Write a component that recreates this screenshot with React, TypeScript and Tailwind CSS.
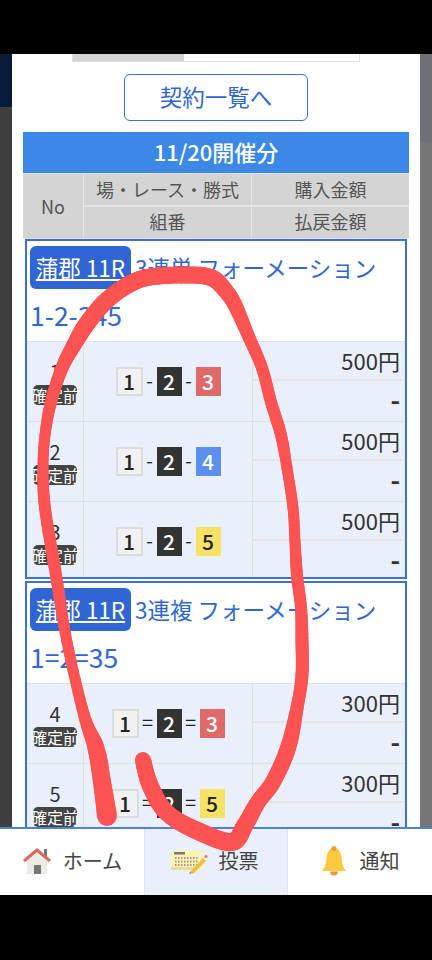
const jp = { fontFamily: '"Noto Sans CJK JP", "Noto Sans", sans-serif' };

type Bet = { no: number; a: string; b: string; c: string; amount: string };

const boatColors: Record<string, string> = {
    '1': 'bg-[#f1f1f1] border-2 border-[#dcdcdc] text-[#222]',
    '2': 'bg-[#333333] text-white',
    '3': 'bg-[#e06a6a] text-white',
    '4': 'bg-[#5c8fee] text-white',
    '5': 'bg-[#f6e265] text-[#222]',
};

const Boat = ({ n }: { n: string }) => (
    <div className={`flex items-center justify-center h-[29px] text-[21px] font-medium leading-none ${n === '1' ? 'w-[27px]' : 'w-[25px]'} ${boatColors[n]}`}>
        {n}
    </div>
);

const Row = ({ bet, sep, last }: { bet: Bet; sep: string; last?: boolean }) => (
    <div className={`flex shrink-0 bg-[#e9f0fc] border-t border-[#e0e0e0] ${last ? 'h-[76px]' : 'h-[80px]'}`}>
        <div className="w-[56px] shrink-0 flex flex-col items-center pt-[19px] text-[#333] text-[20px] leading-[22px]">
            <span>{bet.no}</span>
            {/* the text is wider than the pill in the original */}
            <div className="mt-[2px] bg-[#444] rounded-[5px] h-[20px] w-[44px] flex justify-center">
                <span className="text-white text-[16px] leading-[20px] whitespace-nowrap">確定前</span>
            </div>
        </div>
        <div className="w-[170px] shrink-0 border-x border-[#e0e0e0] flex items-start justify-center pt-[25px] text-[#222]">
            <Boat n={bet.a} />
            <span className={sep === '=' ? 'w-[18px] text-center text-[20px] leading-[26px]' : 'w-[14px] text-center text-[19px] leading-[26px]'}>{sep}</span>
            <Boat n={bet.b} />
            <span className={sep === '=' ? 'w-[18px] text-center text-[20px] leading-[26px]' : 'w-[14px] text-center text-[19px] leading-[26px]'}>{sep}</span>
            <Boat n={bet.c} />
        </div>
        <div className="flex-1 flex flex-col text-[#333] text-right">
            <div className="h-[39px] leading-[37px] text-[22px] border-b-2 border-[#e4e4e4] pr-[5px]">{bet.amount}</div>
            <div className="flex-1 leading-[36px] text-[26px] font-bold pr-[5px]">-</div>
        </div>
    </div>
);

const Card = ({ kind, combo, sep, bets }: { kind: string; combo: string; sep: string; bets: Bet[] }) => (
    <div className="border-2 border-[#3a6ed8] mx-[2px] mb-[2px] shrink-0">
        <div className="h-[100px] pl-[3px] text-[#2f66d4] text-[22.5px]">
            <div className="flex items-center pt-[5px] h-[48px]">
                <span className="bg-[#2f66d4] text-white underline rounded-[6px] h-[43px] w-[101px] flex items-center justify-center whitespace-nowrap">蒲郡 11R</span>
                <span className="ml-[4px] whitespace-nowrap">{kind}</span>
            </div>
            <div className="mt-[10px] leading-[32px] text-[26.5px]">{combo}</div>
        </div>
        {bets.map((b, i) => (
            <Row key={b.no} bet={b} sep={sep} last={i === 2} />
        ))}
    </div>
);

const HomeIcon = () => (
    <svg width="30" height="28" viewBox="0 0 30 28">
        <rect x="22" y="2" width="3" height="8" fill="#777" />
        <path d="M5 12 L15 3 L25 12 V27 H5 Z" fill="#ecebe6" />
        <rect x="12" y="18" width="7" height="9" fill="#777" />
        <path d="M2 14 L15 3 L28 14" fill="none" stroke="#dd6b5c" strokeWidth="3" />
    </svg>
);

const TicketIcon = () => (
    <svg width="38" height="26" viewBox="0 0 38 26">
        <rect x="1" y="2" width="32" height="20" rx="1" fill="#fbf1bd" />
        <rect x="1" y="19" width="24" height="3" fill="#e8dc9a" />
        <rect x="4" y="4" width="11" height="2.5" fill="#777" />
        <path d="M5 10h23M5 13.5h23M5 17h23" stroke="#a89a6a" strokeWidth="2" strokeDasharray="1.5 1.5" />
        <path d="M20 24 L33 10 L36 13 L23 26 Z" fill="#ecc13c" />
        <path d="M19 26 L20 24 L22 25 Z" fill="#777" />
        <circle cx="36" cy="8.5" r="1.6" fill="#e0786c" />
    </svg>
);

const BellIcon = () => (
    <svg width="26" height="30" viewBox="0 0 26 30">
        <path d="M13 1 C8 3 6 6 5.5 12 C5 18 4 21 1 25 H25 C22 21 21 18 20.5 12 C20 6 18 3 13 1 Z" fill="#fbc93d" />
        <circle cx="13" cy="2.5" r="2.5" fill="#ef9a3a" />
        <path d="M9 25.5 A4 4 0 0 0 17 25.5 Z" fill="#ef9a3a" />
    </svg>
);

const NavItem = ({ icon, label, active, gap }: { icon: React.ReactNode; label: string; active?: boolean; gap: string }) => (
    <div className={`w-[144px] shrink-0 flex items-center justify-center pb-[3px] ${gap} ${active ? 'bg-[#e9f0fc] border-x border-[#dfe3ea]' : ''}`}>
        {icon}
        <span className="text-[#444] text-[20px] whitespace-nowrap">{label}</span>
    </div>
);

// marker stroke traced from the picture: x, y, width
const markerPts: number[][] = [
    [107, 816, 20], [102, 782, 18], [96, 748, 17], [84, 715, 12], [67, 642, 11], [56, 575, 12],
    [45, 508, 12], [43, 468, 11], [45, 435, 11], [51, 402, 12], [62, 368, 13], [74, 345, 15],
    [86, 325, 17], [105, 302, 17], [128, 285, 17], [150, 277, 17], [190, 275, 17], [212, 278, 17],
    [225, 290, 16], [235, 305, 15], [248, 335, 13], [262, 368, 12], [271, 402, 12], [281, 435, 12],
    [287, 468, 11], [293, 508, 11], [295, 542, 11], [297, 575, 12], [301, 608, 12], [302, 642, 13],
    [302, 675, 13], [297, 708, 13], [288, 748, 16], [273, 782, 16], [258, 802, 16], [245, 825, 17],
    [232, 842, 18], [200, 832, 18], [167, 813, 17], [150, 785, 17], [143, 760, 16],
];

const Marker = () => {
    const segs = [];
    for (let i = 0; i < markerPts.length - 1; i++) {
        const p0 = markerPts[Math.max(i - 1, 0)];
        const p1 = markerPts[i];
        const p2 = markerPts[i + 1];
        const p3 = markerPts[Math.min(i + 2, markerPts.length - 1)];
        let prev = p1;
        for (let s = 1; s <= 8; s++) {
            const t = s / 8;
            const cr = (k: number) =>
                0.5 * (2 * p1[k] + (p2[k] - p0[k]) * t + (2 * p0[k] - 5 * p1[k] + 4 * p2[k] - p3[k]) * t * t + (3 * p1[k] - p0[k] - 3 * p2[k] + p3[k]) * t * t * t);
            const cur = [cr(0), cr(1), cr(2)];
            segs.push(<line key={`${i}-${s}`} x1={prev[0]} y1={prev[1]} x2={cur[0]} y2={cur[1]} strokeWidth={cur[2]} />);
            prev = cur;
        }
    }
    return (
        <svg className="absolute inset-0 pointer-events-none" width="432" height="960" viewBox="0 0 432 960" stroke="#fe5353" strokeLinecap="round">
            {segs}
        </svg>
    );
};

export default function App() {
    const bets1: Bet[] = [
        { no: 1, a: '1', b: '2', c: '3', amount: '500円' },
        { no: 2, a: '1', b: '2', c: '4', amount: '500円' },
        { no: 3, a: '1', b: '2', c: '5', amount: '500円' },
    ];
    const bets2: Bet[] = [
        { no: 4, a: '1', b: '2', c: '3', amount: '300円' },
        { no: 5, a: '1', b: '2', c: '5', amount: '300円' },
    ];

    return (
        <div className="w-[432px] h-[960px] bg-black flex flex-col overflow-hidden relative" style={jp}>
            <div className="h-[54px] shrink-0 bg-black" />
            <div className="h-[773px] shrink-0 flex overflow-hidden bg-[#3c3c3c]">
                {/* dimmed page behind the modal */}
                <div className="w-[12px] shrink-0 flex flex-col">
                    <div className="h-[53px] bg-[#071a3a]" />
                    <div className="flex-1 bg-[#3e3e3e]" />
                </div>
                <div className="w-[408px] shrink-0 bg-white flex flex-col overflow-hidden">
                    <div className="mx-[60px] h-[8px] shrink-0 flex border-x border-b border-[#e0e0e0]">
                        <div className="w-[111px] bg-[#d4d4d4]" />
                    </div>
                    <div className="mt-[12px] mx-auto w-[184px] h-[47px] shrink-0 border border-[#3a6ed8] rounded-[6px] flex items-center justify-center pb-[2px] text-[#2f66d4] text-[22.5px]">
                        契約一覧へ
                    </div>
                    <div className="mt-[11px] mx-[11px] flex flex-col">
                        <div className="h-[41px] shrink-0 bg-[#3b88e6] text-white text-[22px] font-medium flex items-center justify-center pb-[3px]">
                            11/20開催分
                        </div>
                        <div className="flex h-[66px] shrink-0 bg-[#d4d4d4] text-[#555] text-[18px] border-y border-[#e4e4e4]">
                            <div className="w-[60px] flex items-center justify-center">No</div>
                            <div className="w-[169px] border-x border-[#e4e4e4] flex flex-col">
                                <div className="flex-1 flex items-center justify-center border-b-2 border-[#e4e4e4] whitespace-nowrap">場・レース・勝式</div>
                                <div className="flex-1 flex items-center justify-center pb-[1px]">組番</div>
                            </div>
                            <div className="flex-1 flex flex-col">
                                <div className="flex-1 flex items-center justify-center border-b-2 border-[#e4e4e4]">購入金額</div>
                                <div className="flex-1 flex items-center justify-center pb-[1px]">払戻金額</div>
                            </div>
                        </div>
                        <Card kind="3連単 フォーメーション" combo="1-2-345" sep="-" bets={bets1} />
                        <Card kind="3連複 フォーメーション" combo="1=2=35" sep="=" bets={bets2} />
                    </div>
                </div>
                <div className="w-[12px] shrink-0 flex flex-col">
                    <div className="h-[88px] bg-[#6e7075]" />
                    <div className="flex-1 bg-[#767676]" />
                </div>
            </div>
            <div className="h-[68px] shrink-0 flex bg-white border-t-2 border-[#4f7fe0]">
                <NavItem icon={<HomeIcon />} label="ホーム" gap="gap-[11px]" />
                <NavItem icon={<TicketIcon />} label="投票" active gap="gap-[11px] pr-[4px]" />
                <NavItem icon={<BellIcon />} label="通知" gap="gap-[13px]" />
            </div>
            <div className="flex-1 bg-black" />

            {/* hand-drawn marker over the screenshot */}
            <Marker />
        </div>
    );
}
